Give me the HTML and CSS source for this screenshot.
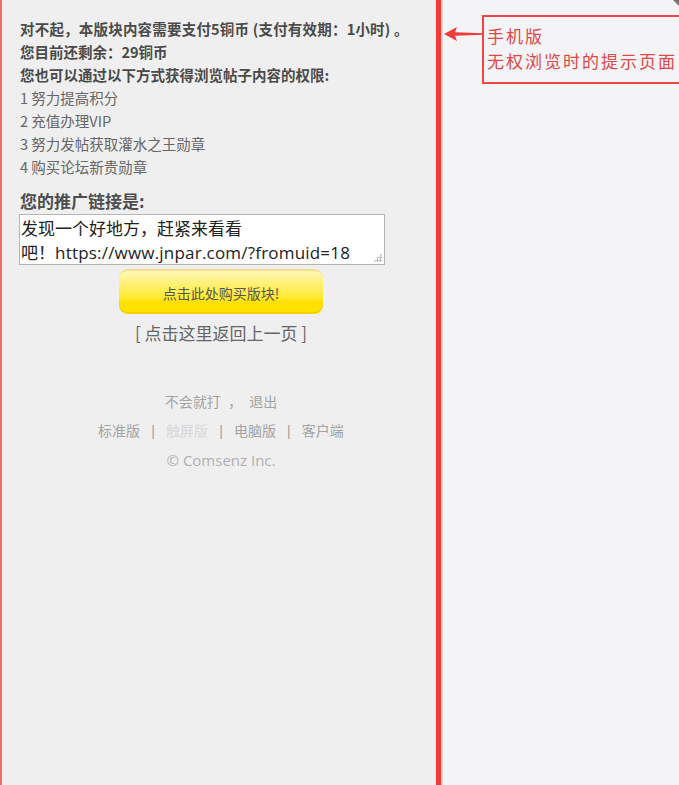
FILE: index.html
```html
<!DOCTYPE html>
<html lang="zh">
<head>
<meta charset="utf-8">
<title>提示</title>
<link rel="stylesheet" href="styles.css">
</head>
<body>
<div class="page">
  <div class="phone">
    <div class="msg">
      <p class="b">对不起，本版块内容需要支付5铜币 (支付有效期：1小时) 。</p>
      <p class="b">您目前还剩余：29铜币</p>
      <p class="b">您也可以通过以下方式获得浏览帖子内容的权限:</p>
      <p>1 努力提高积分</p>
      <p>2 充值办理VIP</p>
      <p>3 努力发帖获取灌水之王勋章</p>
      <p>4 购买论坛新贵勋章</p>
    </div>
    <h3 class="promo">您的推广链接是:</h3>
    <div class="ta">发现一个好地方，赶紧来看看<br>吧！<span class="url">https://www.jnpar.com/?fromuid=18</span><span class="grip"></span></div>
    <div class="btnrow"><a class="buy">点击此处购买版块!</a></div>
    <div class="back">[ 点击这里返回上一页 ]</div>
    <div class="foot">
      <p>不会就打 <span class="comma">，</span> 退出</p>
      <p>标准版 <span class="sep">|</span> <span class="dim">触屏版</span> <span class="sep">|</span> 电脑版 <span class="sep">|</span> 客户端</p>
      <p class="copy">© Comsenz Inc.</p>
    </div>
  </div>
  <div class="redbar"></div>
  <div class="right">
    <div class="corner"></div>
    <div class="note">
      <svg class="arrow" width="40" height="16" viewBox="0 0 40 16"><path d="M0 8 L13 1 L11 6.3 L40 7.2 L40 8.8 L11 9.7 L13 15 Z" fill="#f03c3c"/></svg>
      <div class="box">手机版<br>无权浏览时的提示页面</div>
    </div>
  </div>
</div>
</body>
</html>
```

FILE: styles.css
```css
html, body { margin: 0; padding: 0; }
body { font-family: "Noto Sans CJK SC", "Noto Sans", sans-serif; background: #f4f4f6; }
.page { display: flex; height: 785px; }
.phone {
  width: 434px;
  border-left: 2px solid #f76b6b;
  background: #efefef;
}
.msg { padding: 17px 0 0 18px; }
.msg p { margin: 0; font-size: 14.5px; line-height: 23px; color: #666; height: 23px; white-space: nowrap; }
.msg p.b { font-weight: bold; font-size: 14.5px; color: #4a4a4a; }
.msg p.b:first-child { letter-spacing: 0.2px; }
.promo { margin: 12px 0 0 18px; font-size: 17px; line-height: 22px; color: #4d4d4d; font-weight: bold; }
.ta {
  position: relative;
  margin: 2px 0 0 17px;
  width: 361px; height: 48px;
  background: #fff;
  border: 1px solid #b5b5b5;
  font-size: 17px; line-height: 24px; color: #222;
  padding: 1px 2px 0 1px;
  white-space: nowrap;
}
.url { letter-spacing: 0.2px; font-family: "Open Sans", "Noto Sans", sans-serif; }
.grip {
  position: absolute; right: 2px; bottom: 2px; width: 9px; height: 9px;
  background: radial-gradient(circle, #bbb 1px, transparent 1.2px) 0 0 / 3px 3px;
  clip-path: polygon(100% 0, 100% 100%, 0 100%);
}
.btnrow { display: flex; justify-content: center; padding-left: 4px; margin-top: 4px; }
.buy {
  display: flex; align-items: center; justify-content: center;
  width: 204px; height: 45px; box-sizing: border-box;
  border-radius: 9px;
  background: linear-gradient(#fff8b8 0%, #ffef6a 35%, #ffe930 62%, #ffdf00 72%, #ffe400 100%);
  border-top: 2px solid #f2dd8a;
  box-shadow: inset 0 -2px 0 #f5d000;
  font-size: 14px; color: #555;
}
.back { text-align: center; padding-left: 4px; margin-top: 6px; font-size: 17px; line-height: 26px; color: #666; }
.foot { margin-top: 41px; text-align: center; padding-left: 4px; color: #a3a3a3; font-size: 14px; }
.foot p { margin: 0; line-height: 29px; }
.foot .comma { margin: 0 4px; }
.foot .sep { margin: 0 8px; color: #a0a0a0; font-family: "Liberation Sans", sans-serif; }
.foot .dim { color: #d8d8d8; }
.foot .copy { font-family: "Open Sans", "Noto Sans", sans-serif; font-size: 15px; color: #b0b0b0; }
.redbar { width: 5px; background: #f23a3a; border-right: 2px solid #d4d4d6; }
.right { flex: 1; position: relative; background: #f4f4f6; overflow: hidden; }
.corner {
  position: absolute; right: 0; top: 0; width: 0; height: 0;
  border-top: 6px solid #777; border-left: 6px solid transparent;
}
.note { position: absolute; left: 1px; top: 15px; display: flex; align-items: center; }
.arrow { margin-top: -32px; margin-right: -2px; }
.box {
  width: 200px; height: 69px; box-sizing: border-box;
  border: 2px solid #ef4545;
  padding: 6px 0 0 3px;
  font-size: 17px; letter-spacing: 2px; line-height: 25px; color: #e04848;
  white-space: nowrap;
}
```
